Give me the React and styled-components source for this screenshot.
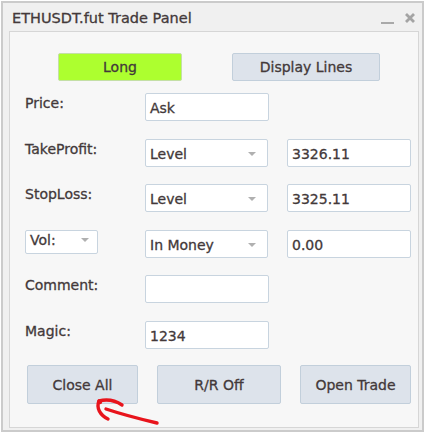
import React from 'react';
import styled, { createGlobalStyle } from 'styled-components';

const GlobalStyle = createGlobalStyle`
  html, body {
    margin: 0;
    padding: 0;
    background: #ffffff;
  }
  body {
    font-family: 'DejaVu Sans', Verdana, sans-serif;
    color: #43393a;
    -webkit-text-stroke: 0.3px #43393a;
  }
`;

const rows = [
  { label: 'Price:', fields: [{ kind: 'input', value: 'Ask' }] },
  {
    label: 'TakeProfit:',
    fields: [
      { kind: 'select', value: 'Level' },
      { kind: 'input', value: '3326.11' },
    ],
  },
  {
    label: 'StopLoss:',
    fields: [
      { kind: 'select', value: 'Level' },
      { kind: 'input', value: '3325.11' },
    ],
  },
  {
    label: 'Vol:',
    labelSelect: true,
    fields: [
      { kind: 'select', value: 'In Money' },
      { kind: 'input', value: '0.00' },
    ],
  },
  { label: 'Comment:', fields: [{ kind: 'input', value: '' }] },
  { label: 'Magic:', fields: [{ kind: 'input', value: '1234' }] },
];

export default function App() {
  return (
    <>
      <GlobalStyle />
      <Window>
        <TitleBar>
          <Title>ETHUSDT.fut Trade Panel</Title>
          <Controls>
            <Minimize />
            <CloseIcon viewBox="0 0 10 10">
              <path d="M1 1 L9 9 M9 1 L1 9" />
            </CloseIcon>
          </Controls>
        </TitleBar>

        <Panel>
          <TopButtons>
            <Button $width={124} $height={28} $green>
              Long
            </Button>
            <Button $width={148} $height={28}>
              Display Lines
            </Button>
          </TopButtons>

          <Form>
            {rows.map(({ label, labelSelect, fields }) => (
              <React.Fragment key={label}>
                {labelSelect ? (
                  <SmallSelect>
                    <span>{label}</span>
                    <Caret />
                  </SmallSelect>
                ) : (
                  <Label>{label}</Label>
                )}
                {fields.map((f, i) =>
                  f.kind === 'select' ? (
                    <Field key={i} $select>
                      <span>{f.value}</span>
                      <Caret />
                    </Field>
                  ) : (
                    <Field key={i}>{f.value}</Field>
                  )
                )}
                {fields.length === 1 && <span />}
              </React.Fragment>
            ))}
          </Form>

          <BottomButtons>
            <Button $width={111} $height={39}>
              Close All
            </Button>
            <Button $width={124} $height={39}>
              R/R Off
            </Button>
            <Button $width={111} $height={39}>
              Open Trade
            </Button>
          </BottomButtons>
        </Panel>
      </Window>

      <Annotation viewBox="0 0 425 433">
        <path d="M157 423 C 140 419, 124 415, 106 409" />
        <path d="M99 401 C 107 399, 116 401, 122 405" />
        <path d="M99 401 C 96 408, 100 415, 108 419" />
        <circle cx="100" cy="402" r="2.2" fill="#e8141c" stroke="none" />
      </Annotation>
    </>
  );
}

const Window = styled.div`
  box-sizing: border-box;
  margin: 1px 0 0 1px;
  width: 423px;
  height: 431px;
  border: 2px solid #cbcbcb;
  background: #f0f0f0;
  display: flex;
  flex-direction: column;
`;

const TitleBar = styled.div`
  height: 28px;
  display: flex;
  align-items: center;
  justify-content: space-between;
  padding: 0 7px 0 9px;
  flex-shrink: 0;
`;

const Title = styled.div`
  font-size: 14.5px;
  margin-top: 2px;
`;

const Controls = styled.div`
  display: flex;
  align-items: center;
  gap: 11px;
  margin-top: 2px;
`;

const Minimize = styled.span`
  display: block;
  width: 13px;
  height: 2px;
  background: #a9a9a9;
  margin-top: 10px;
`;

const CloseIcon = styled.svg`
  width: 10px;
  height: 10px;
  stroke: #a4a4a4;
  stroke-width: 2.8;
  fill: none;
`;

const Panel = styled.div`
  box-sizing: border-box;
  margin: 0 3px 0 6px;
  height: 397px;
  border: 1px solid #d6d6d6;
  background: #f7f7f7;
  display: flex;
  flex-direction: column;
`;

const TopButtons = styled.div`
  display: flex;
  gap: 50px;
  padding: 21px 0 0 48px;
`;

const Button = styled.div`
  box-sizing: border-box;
  width: ${(p) => p.$width}px;
  height: ${(p) => p.$height}px;
  display: flex;
  align-items: center;
  justify-content: center;
  font-size: 14px;
  background: ${(p) => (p.$green ? '#adff2f' : '#dde3eb')};
  border: 1px solid ${(p) => (p.$green ? '#c4dfa6' : '#c2cfdb')};
  border-radius: 2px;
`;

const Form = styled.div`
  display: grid;
  grid-template-columns: 120px 142px 124px;
  grid-auto-rows: 28px;
  row-gap: 17.5px;
  padding: 12px 0 0 15px;
`;

const Label = styled.div`
  font-size: 14px;
  padding-top: 2px;
`;

const Field = styled.div`
  box-sizing: border-box;
  width: ${(p) => (p.$select ? 123 : 124)}px;
  height: 28px;
  display: flex;
  align-items: center;
  justify-content: space-between;
  padding: 2px 11px 0 4px;
  font-size: 14px;
  background: #ffffff;
  border: 1px solid #c8d4df;
  border-radius: 2px;
`;

const SmallSelect = styled(Field)`
  width: 73px;
  height: 24px;
  padding: 0 8px 4px 4px;
`;

const Caret = styled.span`
  width: 0;
  height: 0;
  border-left: 4.5px solid transparent;
  border-right: 4.5px solid transparent;
  border-top: 4.5px solid #b0b0b0;
`;

const BottomButtons = styled.div`
  display: flex;
  gap: 19px;
  padding: 16.5px 0 0 17px;
`;

const Annotation = styled.svg`
  position: absolute;
  left: 0;
  top: 0;
  width: 425px;
  height: 433px;
  pointer-events: none;
  fill: none;
  stroke: #e8141c;
  stroke-width: 3.4;
  stroke-linecap: round;
  stroke-linejoin: round;
`;
